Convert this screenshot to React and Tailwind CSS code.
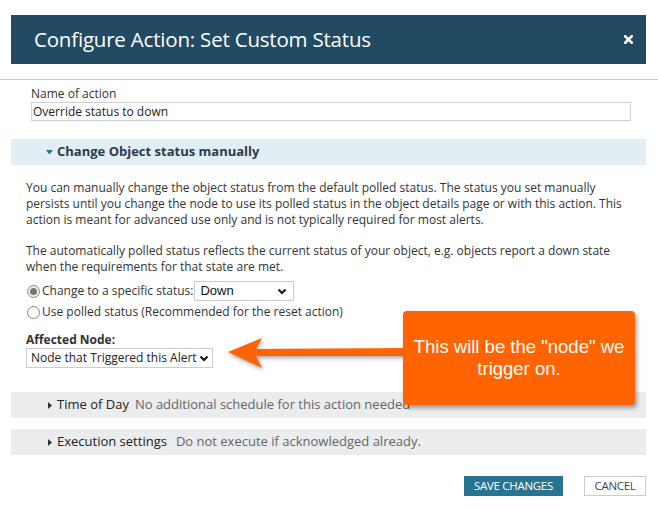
export default function App() {
  const body = { fontFamily: '"Open Sans", "DejaVu Sans", sans-serif' };

  return (
    <div className="relative w-[658px] h-[510px] bg-white overflow-hidden text-[#333]" style={body}>
      {/* header */}
      <div className="mx-[11px] mt-[15px] h-[49px] w-[635px] bg-[#234a63] flex items-center justify-between pl-[23px] pr-[13px]">
        <h1 className="text-white text-[20.5px] tracking-[-0.2px]">Configure Action: Set Custom Status</h1>
        <svg width="9" height="9" viewBox="0 0 10 10">
          <path d="M1.5 1.5 L8.5 8.5 M8.5 1.5 L1.5 8.5" stroke="#fff" strokeWidth="3" strokeLinecap="square" />
        </svg>
      </div>

      <div className="mt-[15px] border-t border-[#c8c8c8]" />

      {/* name of action */}
      <div className="pl-[31px] pt-[6px]">
        <label className="block text-[12px] leading-[16px] text-[#333]">Name of action</label>
        <input
          readOnly
          value="Override status to down"
          className="block w-[600px] h-[19px] border border-[#d0d0d0] px-[1px] text-[12px] text-[#222] outline-none"
          style={body}
        />
      </div>

      {/* section */}
      <div className="mt-[18px] mx-[11px] w-[635px] h-[26px] bg-[#e1eff5] flex items-center pl-[35px]">
        <svg width="7" height="5" viewBox="0 0 7 5" className="mr-[4px]">
          <path d="M0 0 H7 L3.5 4.5 Z" fill="#2e6f8c" />
        </svg>
        <span className="text-[13px] font-bold text-[#2b3b4a]">Change Object status manually</span>
      </div>

      <div className="pl-[26px] pr-[26px] text-[12px] leading-[16px] text-[#333]">
        <p className="mt-[15px]">
          You can manually change the object status from the default polled status. The status you set manually persists until you change the node to use its polled status in the object details page or with this action. This action is meant for advanced use only and is not typically required for most alerts.
        </p>
        <p className="mt-[15px]">
          The automatically polled status reflects the current status of your object, e.g. objects report a down state when the requirements for that state are met.
        </p>

        <div className="mt-[6px] flex items-center h-[20px]">
          <span className="w-[13px] h-[13px] rounded-full border border-[#888] bg-[#eee] flex items-center justify-center mr-[2px] ml-[1px]">
            <span className="w-[7px] h-[7px] rounded-full bg-[#777]" />
          </span>
          <span>Change to a specific status:</span>
          <div className="ml-[1px] w-[100px] h-[20px] border border-[#ccc] flex items-center justify-between pl-[5px] pr-[6px] text-[13px] text-[#111]" style={{ fontFamily: '"Liberation Sans", Arial, sans-serif' }}>
            <span>Down</span>
            <svg width="10" height="7" viewBox="0 0 10 7">
              <path d="M1.5 1.5 L5 5 L8.5 1.5" stroke="#111" strokeWidth="2" fill="none" />
            </svg>
          </div>
        </div>
        <div className="mt-[1px] flex items-center h-[20px]">
          <span className="w-[13px] h-[13px] rounded-full border border-[#888] bg-white mr-[2px] ml-[1px]" />
          <span>Use polled status (Recommended for the reset action)</span>
        </div>

        <div className="mt-[10px] text-[12px] leading-[16px] font-bold text-[#333]">Affected Node:</div>
        <div className="w-[187px] h-[20px] border border-[#ccc] flex items-center justify-between pl-[4px] pr-[3px] text-[12px] text-[#222] whitespace-nowrap">
          <span>Node that Triggered this Alert</span>
          <svg width="10" height="7" viewBox="0 0 10 7">
            <path d="M1.5 1.5 L5 5 L8.5 1.5" stroke="#111" strokeWidth="2" fill="none" />
          </svg>
        </div>
      </div>

      {/* collapsed sections */}
      <div className="mt-[24px] mx-[11px] w-[635px] h-[26px] bg-[#ebecee] flex items-center pl-[37px] text-[13px]">
        <svg width="4" height="7" viewBox="0 0 4 7" className="mr-[5px]">
          <path d="M0 0 L4 3.5 L0 7 Z" fill="#333" />
        </svg>
        <span className="text-[#222]">Time of Day</span>
        <span className="ml-[6px] text-[#666]">No additional schedule for this action needed</span>
      </div>
      <div className="mt-[11px] mx-[11px] w-[635px] h-[26px] bg-[#ebecee] flex items-center pl-[37px] text-[13px]">
        <svg width="4" height="7" viewBox="0 0 4 7" className="mr-[5px]">
          <path d="M0 0 L4 3.5 L0 7 Z" fill="#333" />
        </svg>
        <span className="text-[#222]">Execution settings</span>
        <span className="ml-[9px] text-[#666]">Do not execute if acknowledged already.</span>
      </div>

      {/* buttons */}
      <div className="mt-[21px] mr-[12px] flex justify-end gap-[21px] text-[11.5px]">
        <button className="w-[99px] h-[20px] bg-[#297591] text-white tracking-[-0.3px]" style={body}>SAVE CHANGES</button>
        <button className="w-[62px] h-[20px] border border-[#ccc] bg-white text-[#444] tracking-[-0.3px]" style={body}>CANCEL</button>
      </div>

      {/* annotation arrow */}
      <svg className="absolute left-[226px] top-[336px]" width="185" height="40" viewBox="0 0 185 40" style={{ filter: "drop-shadow(1px 2px 2px rgba(0,0,0,0.35))" }}>
        <path d="M2 16 L36 2 L30 13 L185 12 L185 20 L30 20 L36 32 Z" fill="#ff6400" />
      </svg>

      {/* callout */}
      <div
        className="absolute left-[403px] top-[311px] w-[232px] h-[94px] rounded-[4px] bg-[#ff6400] shadow-[2px_3px_4px_rgba(0,0,0,0.35)] flex items-center justify-center text-center text-white text-[18.5px] leading-[22px] px-[6px]"
        style={{ fontFamily: '"Liberation Sans", Arial, sans-serif' }}
      >
        This will be the "node" we trigger on.
      </div>
    </div>
  );
}
